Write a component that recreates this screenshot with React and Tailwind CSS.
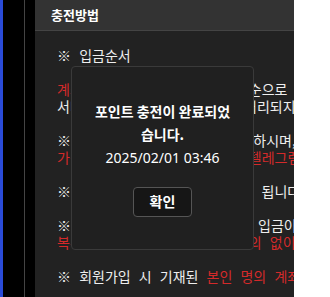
import { useState } from 'react'

const RED = 'text-[#d42a2a]'

function Line({ children }) {
  return <div className="whitespace-nowrap leading-[17px]">{children}</div>
}

function GuidePanel() {
  return (
    <div className="w-[259px] shrink-0 flex flex-col bg-[#222222] overflow-hidden">
      <div className="h-[31px] shrink-0 bg-[#333333] border-b border-[#444444] flex items-center pl-4">
        <h2 className="text-[13px] font-bold text-white">충전방법</h2>
      </div>

      <div className="pt-[16px] pl-[22px] text-[14px] text-[#eeeeee] [word-spacing:5px] flex flex-col gap-[17px]">
        <Line>※ 입금순서</Line>

        <div>
          <Line>
            <span className={RED}>계좌문의</span> 후 입금확인신청처리 순으로 진행됩니다.
          </Line>
          <Line>서비스 이용후 재입금 하시면 처리되지 않습니다.</Line>
        </div>

        <div>
          <Line>※ 입금전 반드시 계좌 확인을 하시며,</Line>
          <Line>
            <span className={RED}>가상계좌변경시 고객센터 또는 텔레그램으로 문의바랍니다.</span>
          </Line>
        </div>

        <Line>※ 입금 확인 후 자동으로 충전 됩니다.</Line>

        <div>
          <Line>※ 입금자명이 회원명과 다를시 입금이 확인되지 않으며,</Line>
          <Line>
            <span className={RED}>복수계좌로 분할입금시 사전 문의 없이 처리되지 않습니다.</span>
          </Line>
        </div>

        <Line>
          ※ 회원가입 시 기재된 <span className={RED}>본인 명의 계좌로만 입금하셔야 합니다.</span>
        </Line>
      </div>
    </div>
  )
}

function DoneModal({ onClose }) {
  return (
    <div className="absolute left-[71px] top-[66px] w-[183px] h-[184px] rounded-[4px] border border-[#3a3a3a] bg-[#202020] flex flex-col items-center justify-center text-white">
      <p className="text-[14px] font-bold leading-[23px] text-center">
        포인트 충전이 완료되었
        <br />
        습니다.
      </p>
      <p className="text-[14px] leading-[23px] font-['Noto_Sans','Noto_Sans_CJK_KR',sans-serif]">
        2025/02/01 03:46
      </p>
      <button
        onClick={onClose}
        className="mt-[18px] w-[59px] h-[30px] rounded-[4px] border border-[#555555] bg-[#161616] text-[14px] font-bold"
      >
        확인
      </button>
    </div>
  )
}

export default function App() {
  const [open, setOpen] = useState(true)

  return (
    <div className="relative w-[330px] h-[297px] overflow-hidden flex bg-white font-['Noto_Sans_CJK_KR','Noto_Sans',sans-serif]">
      <div className="w-[3px] shrink-0 bg-[#2a4bd8]" />
      <div className="w-[21px] shrink-0 bg-black" />
      <div className="w-px shrink-0 bg-[#444444]" />
      <div className="w-[10px] shrink-0 bg-black" />
      <GuidePanel />
      <div className="flex-1 bg-white" />

      {open && <DoneModal onClose={() => setOpen(false)} />}
    </div>
  )
}
